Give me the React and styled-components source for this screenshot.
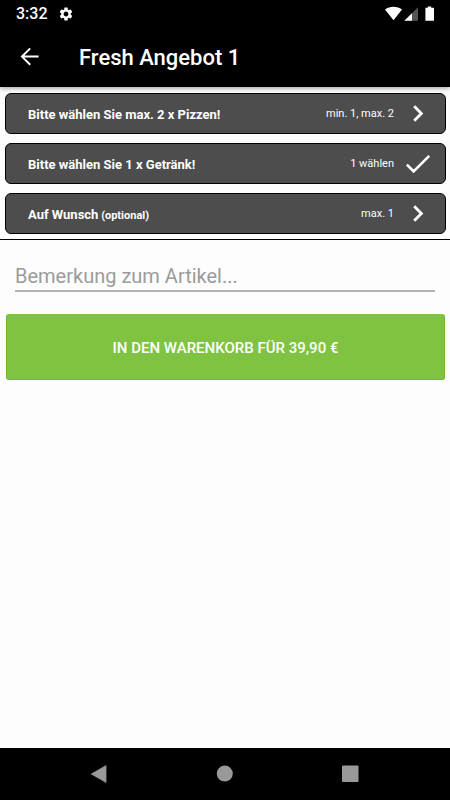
import React from 'react';
import styled, { createGlobalStyle } from 'styled-components'
import { MdSettings } from 'react-icons/md'

const GlobalStyle = createGlobalStyle`
    *{
        box-sizing: border-box;
    }
    body{
        margin: 0;
        background: #fdfdfd;
        font-family: Roboto, sans-serif;
    }
    button, input{
        font-family: inherit;
        margin: 0;
    }
`
const Screen = styled.div`
    display: flex;
    flex-direction: column;
    min-height: 100vh;
`
const Header = styled.header`
    background: #000;
    color: #fff;
    box-shadow: 0 1px 5px rgba(0, 0, 0, 0.4);
`
const StatusBar = styled.div`
    display: flex;
    align-items: center;
    height: 27px;
    padding: 0 16px;
    font-size: 16px;
    font-weight: 500;
    .gear{
        margin-left: 10px;
    }
    .signals{
        display: flex;
        align-items: center;
        margin-left: auto;
    }
`
const TitleBar = styled.div`
    display: flex;
    align-items: center;
    height: 60px;
    padding: 0 16px;
    gap: 35px;
    h1{
        margin: 0;
        padding-top: 2px;
        font-size: 22px;
        line-height: 28px;
        font-weight: 500;
    }
`
const IconButton = styled.button`
    display: flex;
    align-items: center;
    justify-content: center;
    padding: 0;
    border: 0;
    background: none;
    color: inherit;
    cursor: pointer;
`
const OptionList = styled.div`
    display: flex;
    flex-direction: column;
    gap: 9px;
    padding: 6px 4px 5px 5px;
    border-bottom: 1px solid #000;
`
const OptionButton = styled.button`
    display: flex;
    align-items: center;
    width: 100%;
    height: 41px;
    padding: 0 13px 0 22px;
    border: 1px solid #000;
    border-radius: 6px;
    background: #4d4d4d;
    color: #fff;
    text-align: left;
    cursor: pointer;
    .label{
        flex: 1;
        padding-top: 2px;
        font-size: 13px;
        line-height: 16px;
        font-weight: 700;
    }
    small{
        font-size: 11px;
        line-height: 1;
    }
    .hint{
        margin-right: 10px;
        font-size: 11px;
        line-height: 16px;
    }
`
const Remark = styled.input`
    display: block;
    height: 31px;
    margin: 21px 15px 0;
    padding: 0;
    border: 0;
    border-bottom: 2px solid #b4b4b4;
    border-radius: 0;
    outline: 0;
    background: none;
    color: #222;
    font-size: 20px;
    &::placeholder{
        color: #9b9b9b;
        opacity: 1;
    }
`
const CartButton = styled.button`
    height: 66px;
    margin: 22px 5px 0 6px;
    padding-top: 2px;
    border: 1px solid #6fbb25;
    border-top-color: #80c342;
    border-radius: 3px;
    background: #80c342;
    color: #fff;
    font-size: 15px;
    font-weight: 500;
    cursor: pointer;
`
const NavBar = styled.nav`
    display: grid;
    grid-template-columns: 1fr 1fr 1fr;
    height: 52px;
    margin-top: auto;
    padding: 0 8%;
    background: #000;
    color: #999;
`

const Chevron = () => (
    <svg width='28' height='24' viewBox='0 0 28 24' fill='none' stroke='#fff' strokeWidth='2.8'>
        <path d='M10.2 4.2 L17.4 11.5 L10.2 18.8' />
    </svg>
)

const Check = () => (
    <svg width='28' height='24' viewBox='0 0 28 24' fill='none' stroke='#fff' strokeWidth='2.6'>
        <path d='M2.8 12.6 L9.6 19.3 L25.2 3.8' />
    </svg>
)

const options = [
    { label: 'Bitte wählen Sie max. 2 x Pizzen!', hint: 'min. 1, max. 2' },
    { label: 'Bitte wählen Sie 1 x Getränk!', hint: '1 wählen', done: true },
    { label: 'Auf Wunsch', note: '(optional)', hint: 'max. 1' },
]

const Option = ({ label, note, hint, done }) => (
    <OptionButton type='button'>
        <span className='label'>{label}{note && <small> {note}</small>}</span>
        <span className='hint'>{hint}</span>
        {done ? <Check /> : <Chevron />}
    </OptionButton>
)

const App = () => (
    <Screen>
        <GlobalStyle />
        <Header>
            <StatusBar>
                <span>3:32</span>
                <MdSettings className='gear' size={16} />
                <div className='signals'>
                    <svg width='49' height='16' viewBox='0 0 49 16' fill='#fff'>
                        <path d='M0 3.6 C4.8 -0.2 12.2 -0.2 17 3.6 L8.5 14.2 Z' />
                        <path d='M33 1.2 V14.8 H19.4 Z' fill='#555' />
                        <path d='M27 7.2 V14.8 H19.4 Z' />
                        <path d='M42.8 0.4 H46.2 V1.8 H49 V14.8 H40.4 V1.8 H42.8 Z' />
                    </svg>
                </div>
            </StatusBar>
            <TitleBar>
                <IconButton type='button' aria-label='Zurück'>
                    <svg width='28' height='28' viewBox='0 0 28 28' fill='none' stroke='#fff' strokeWidth='2'>
                        <path d='M22.6 13.6 H6 M14.2 5.4 L6 13.6 L14.2 21.8' />
                    </svg>
                </IconButton>
                <h1>Fresh Angebot 1</h1>
            </TitleBar>
        </Header>
        <OptionList>
            {options.map(o => <Option key={o.label} {...o} />)}
        </OptionList>
        <Remark type='text' aria-label='Bemerkung zum Artikel' placeholder='Bemerkung zum Artikel...' />
        <CartButton type='button'>IN DEN WARENKORB FÜR 39,90 €</CartButton>
        <NavBar>
            <IconButton type='button' aria-label='Zurück'>
                <svg width='18' height='18' viewBox='0 0 18 18' fill='currentColor'>
                    <path d='M16.4 0 V18 L0.6 9 Z' />
                </svg>
            </IconButton>
            <IconButton type='button' aria-label='Startseite'>
                <svg width='18' height='18' viewBox='0 0 18 18' fill='currentColor'>
                    <circle cx='8.8' cy='8.6' r='8' />
                </svg>
            </IconButton>
            <IconButton type='button' aria-label='Übersicht'>
                <svg width='18' height='18' viewBox='0 0 18 18' fill='currentColor'>
                    <rect x='0' y='0.5' width='16.5' height='16.5' rx='1' />
                </svg>
            </IconButton>
        </NavBar>
    </Screen>
)

export default App;
